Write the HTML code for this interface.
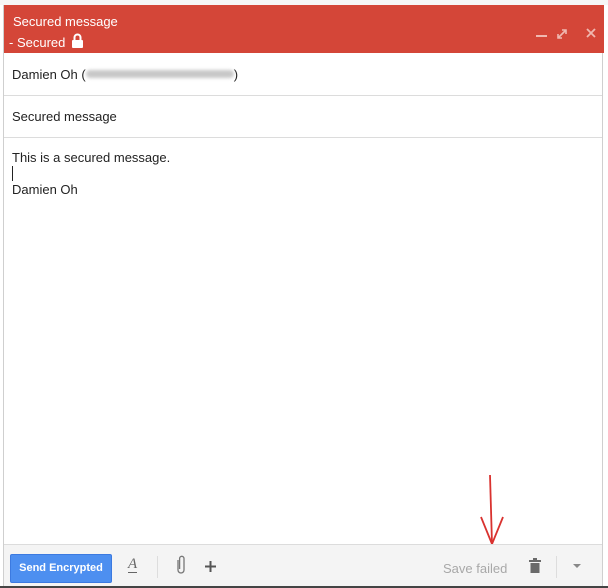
<!DOCTYPE html>
<html><head><meta charset="utf-8"><style>
*{margin:0;padding:0;box-sizing:border-box}
body{width:608px;height:588px;background:#fff;font-family:"Liberation Sans",Arial,sans-serif;position:relative;overflow:hidden}
.win{position:absolute;left:3px;top:5px;width:600px;height:581px;border:1px solid #cfcfcf;border-top:none;background:#fff}
.hdr{position:absolute;left:0;top:0;width:600px;height:48px;background:#d44638;color:#fff;font-size:13px}
.row{position:absolute;left:0;width:598px;border-bottom:1px solid #dcdcdc;font-size:13px;color:#222}
.ft{position:absolute;left:0;top:539px;width:598px;height:42px;background:#f4f4f4;border-top:1px solid #dcdcdc}
.btn{position:absolute;left:6px;top:9px;width:102px;height:29px;background:#4d8ff0;border:1px solid #3c7ae0;border-radius:2px;color:#fff;font-weight:bold;font-size:11px;line-height:27px;text-align:center}
.sep{position:absolute;top:11px;width:1px;height:22px;background:#ddd}
</style></head><body>
<div style="position:absolute;left:0;top:0;width:608px;height:5px;background:#f6f6f6"></div>
<div style="position:absolute;left:0;top:586px;width:608px;height:2px;background:#444"></div>
<div class="win">
 <div class="hdr">
  <div style="position:absolute;left:9px;top:9px">Secured message</div>
  <div style="position:absolute;left:5px;top:28px">- Secured
   <svg width="13" height="15" viewBox="0 0 13 15" style="vertical-align:-1px;margin-left:2px"><path d="M3.5 7V4.5a3 3 0 0 1 6 0V7" fill="none" stroke="#fff" stroke-width="2"/><rect x="1" y="7" width="11" height="8" rx="1" fill="#fff"/></svg></div>
  <svg style="position:absolute;left:530px;top:20px" width="70" height="16">
   <rect x="2" y="10" width="11" height="2" fill="#f0b8b0"/>
   <path d="M24 13l8-8M28 5h4v4M24 9v4h4" stroke="#f0b8b0" stroke-width="1.6" fill="none"/>
   <path d="M53 4l8 8M61 4l-8 8" stroke="#f0b8b0" stroke-width="1.8"/>
  </svg>
 </div>
 <div class="row" style="top:48px;height:43px">
  <div style="position:absolute;left:8px;top:14px">Damien Oh (<span style="display:inline-block;width:148px;height:8px;background:#c8c8c8;border-radius:4px;filter:blur(1.5px);vertical-align:1px"></span>)</div>
 </div>
 <div class="row" style="top:91px;height:42px">
  <div style="position:absolute;left:8px;top:13px">Secured message</div>
 </div>
 <div style="position:absolute;left:8px;top:145px;font-size:13px;color:#222;line-height:16px">This is a secured message.<br><span style="display:inline-block;width:1px;height:15px;background:#222;vertical-align:-3px"></span><br>Damien Oh</div>
 <svg style="position:absolute;left:470px;top:470px" width="40" height="70"><path d="M16 0l2 69" stroke="#d9322f" stroke-width="1.8"/><path d="M7 42l11 27l11-27" stroke="#d9322f" stroke-width="1.8" fill="none"/></svg>
 <div class="ft">
  <div class="btn">Send Encrypted</div>
  <div style="position:absolute;left:124px;top:12px;font-family:'Liberation Serif',serif;font-style:italic;font-size:15px;color:#666;border-bottom:1px solid #666;line-height:15px">A</div>
  <div class="sep" style="left:153px"></div>
  <svg style="position:absolute;left:172px;top:10px" width="10" height="21"><path d="M2 5v10a3 3 0 0 0 6 0V3.5a2.2 2.2 0 0 0-4.4 0V14" fill="none" stroke="#777" stroke-width="1.3"/></svg>
  <svg style="position:absolute;left:200px;top:15px" width="13" height="13"><path d="M6.5 1v11M1 6.5h11" stroke="#555" stroke-width="2"/></svg>
  <div style="position:absolute;left:439px;top:16px;font-size:13px;color:#a8a8a8">Save failed</div>
  <svg style="position:absolute;left:524px;top:13px" width="14" height="16"><rect x="1" y="2" width="12" height="2" fill="#6a6a6a"/><rect x="5" y="0" width="4" height="2" fill="#6a6a6a"/><rect x="2.5" y="5" width="9" height="10" fill="#6a6a6a"/></svg>
  <div class="sep" style="left:552px"></div>
  <svg style="position:absolute;left:569px;top:19px" width="10" height="6"><path d="M0 0h8l-4 4z" fill="#888"/></svg>
 </div>
</div>
</body></html>
